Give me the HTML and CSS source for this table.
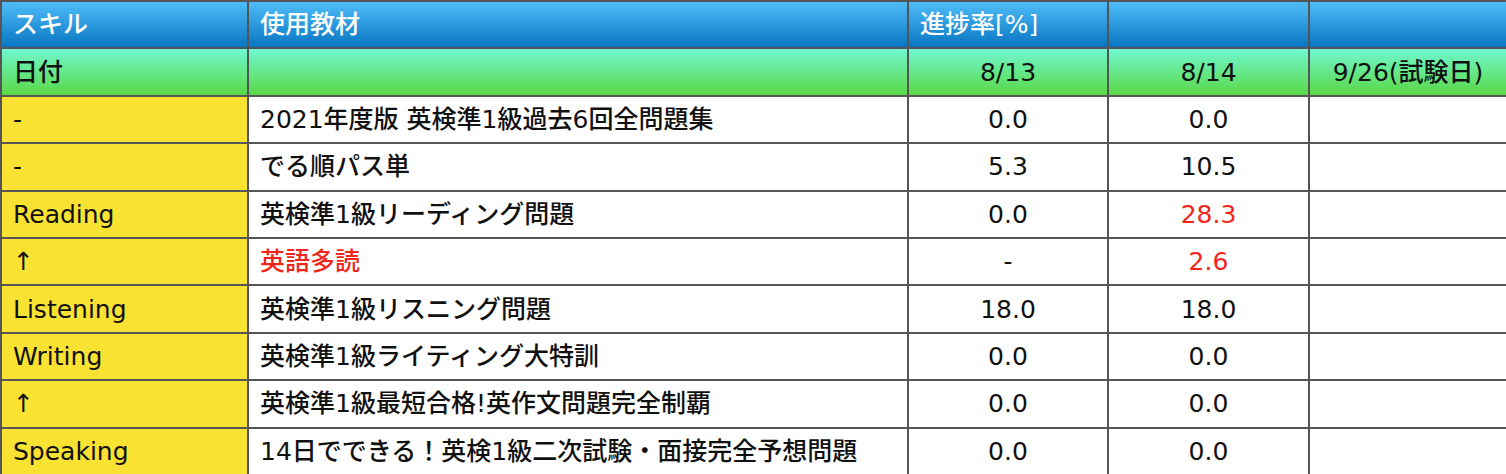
FILE: index.html
```html
<!DOCTYPE html>
<html lang="ja">
<head>
<meta charset="utf-8">
<link rel="stylesheet" href="styles.css">
</head>
<body>
<table class="progress">
  <colgroup>
    <col class="c1"><col class="c2"><col class="c3"><col class="c4"><col class="c5">
  </colgroup>
  <tr class="head">
    <td>スキル</td><td>使用教材</td><td>進捗率[%]</td><td></td><td></td>
  </tr>
  <tr class="date">
    <td>日付</td><td></td><td class="num">8/13</td><td class="num">8/14</td><td class="num">9/26(試験日)</td>
  </tr>
  <tr>
    <td class="skill">-</td><td>2021年度版 英検準1級過去6回全問題集</td><td class="num">0.0</td><td class="num">0.0</td><td></td>
  </tr>
  <tr>
    <td class="skill">-</td><td>でる順パス単</td><td class="num">5.3</td><td class="num">10.5</td><td></td>
  </tr>
  <tr>
    <td class="skill">Reading</td><td>英検準1級リーディング問題</td><td class="num">0.0</td><td class="num red">28.3</td><td></td>
  </tr>
  <tr>
    <td class="skill">↑</td><td class="red">英語多読</td><td class="num">-</td><td class="num red">2.6</td><td></td>
  </tr>
  <tr>
    <td class="skill">Listening</td><td>英検準1級リスニング問題</td><td class="num">18.0</td><td class="num">18.0</td><td></td>
  </tr>
  <tr>
    <td class="skill">Writing</td><td>英検準1級ライティング大特訓</td><td class="num">0.0</td><td class="num">0.0</td><td></td>
  </tr>
  <tr>
    <td class="skill">↑</td><td>英検準1級最短合格!英作文問題完全制覇</td><td class="num">0.0</td><td class="num">0.0</td><td></td>
  </tr>
  <tr>
    <td class="skill">Speaking</td><td>14日でできる！英検1級二次試験・面接完全予想問題</td><td class="num">0.0</td><td class="num">0.0</td><td></td>
  </tr>
</table>
</body>
</html>
```
FILE: styles.css
```css
html, body {
  margin: 0;
  padding: 0;
  background: #ffffff;
}
.progress {
  border-collapse: collapse;
  width: 1506px;
  height: 474px;
  table-layout: fixed;
  font-family: "DejaVu Sans", "Noto Sans CJK JP", sans-serif;
  font-size: 25px;
  font-weight: 500;
  color: #111;
}
.c1 { width: 247px; }
.c2 { width: 660px; }
.c3 { width: 200px; }
.c4 { width: 201px; }
.c5 { width: 198px; }
.progress td {
  border: 2px solid #555555;
  padding: 0 10px 0 11px;
  height: 47.4px;
  box-sizing: border-box;
  white-space: nowrap;
  line-height: 1;
  vertical-align: middle;
}
.head td {
  background: linear-gradient(#4fbcf8, #0876c2);
  color: #ffffff;
}
.date td {
  background: linear-gradient(#70f7d0, #5ad845);
}
.skill {
  background: #f9e231;
}
.progress td.num {
  text-align: center;
  padding-left: 10px;
  padding-right: 10px;
}
.red {
  color: #f0261b;
}
```
